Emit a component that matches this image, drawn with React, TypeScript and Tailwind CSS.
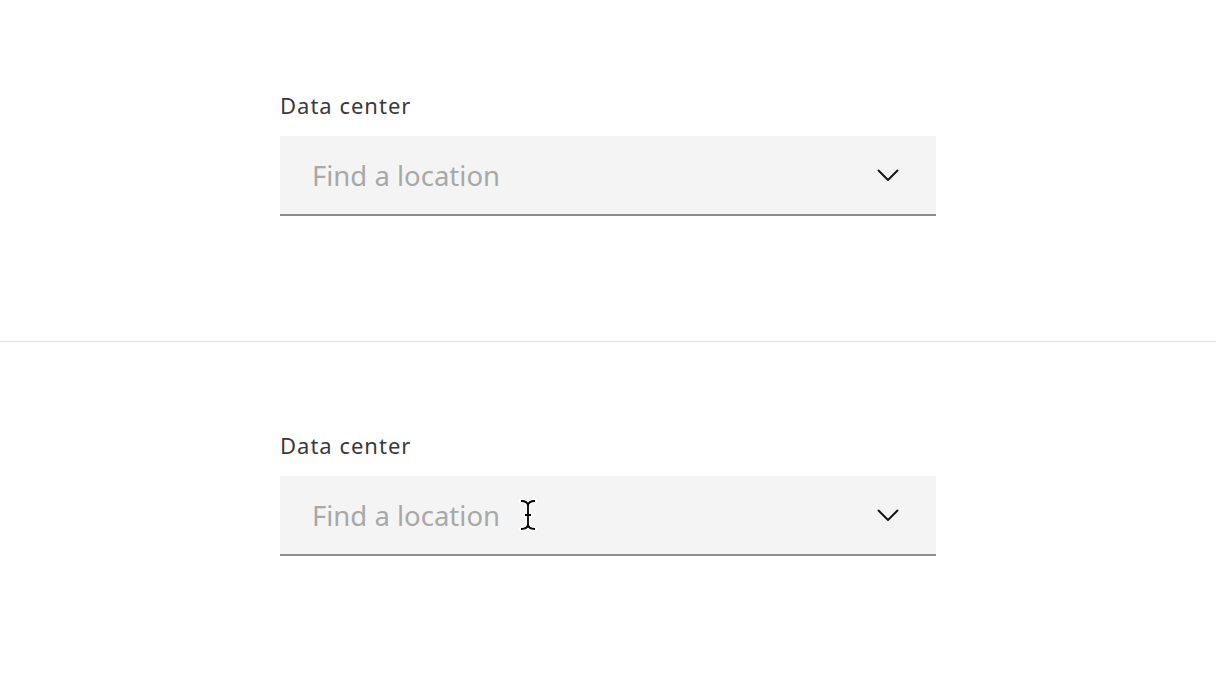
import React from 'react';

const Chevron = () => (
  <svg width="22" height="12" viewBox="0 0 22 12" fill="none" className="shrink-0">
    <path d="M1 1l10 10L21 1" stroke="#161616" strokeWidth="2" />
  </svg>
);

const IBeam = () => (
  <svg width="18" height="34" viewBox="0 0 18 34" fill="none" className="absolute left-[239px] top-[22px]">
    <path d="M2 3c4 0 7 1 7 5v18c0 4-3 5-7 5M16 3c-4 0-7 1-7 5v18c0 4 3 5 7 5M6 17h6" stroke="#fff" strokeWidth="4.5" strokeLinecap="round" />
    <path d="M2 3c4 0 7 1 7 5v18c0 4-3 5-7 5M16 3c-4 0-7 1-7 5v18c0 4 3 5 7 5M6 17h6" stroke="#000" strokeWidth="1.8" />
  </svg>
);

const Field = ({ cursor }: { cursor?: boolean }) => (
  <div className="w-[656px]">
    <label className="block text-[22px] leading-[30px] text-[#393939] tracking-[1px] mb-[16px]">Data center</label>
    <div className="relative h-[80px] bg-[#f4f4f4] border-b-2 border-[#8d8d8d] flex items-center pl-8 pr-[37px]">
      <span className="flex-1 text-[27.5px] text-[#a8a8a8] pt-[2px]">Find a location</span>
      <Chevron />
      {cursor && <IBeam />}
    </div>
  </div>
);

export default function App() {
  return (
    <div className="w-[1216px] h-[684px] bg-white font-['Noto_Sans',sans-serif] overflow-hidden">
      <section className="h-[342px] pl-[280px] pt-[90px] border-b border-[#e0e0e0]">
        <Field />
      </section>
      <section className="h-[342px] pl-[280px] pt-[88px]">
        <Field cursor />
      </section>
    </div>
  );
}
